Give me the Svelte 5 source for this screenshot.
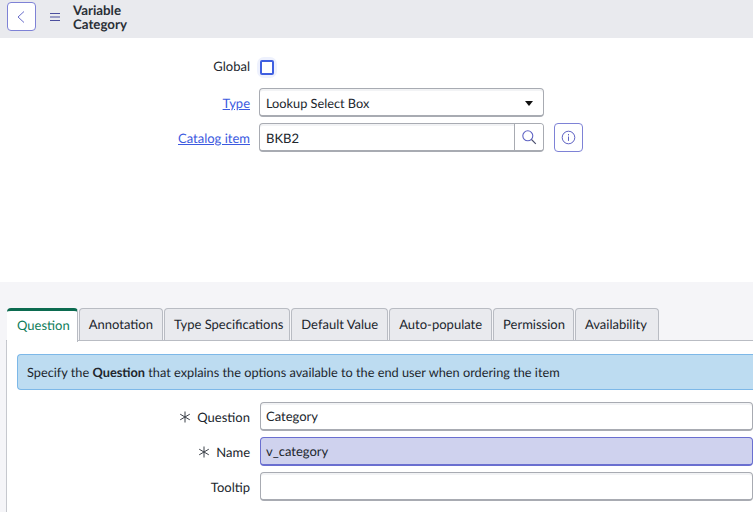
<script>
  const tabs = ["Question", "Annotation", "Type Specifications", "Default Value", "Auto-populate", "Permission", "Availability"];
</script>

{#snippet star()}
  <svg class="star" width="12" height="12" viewBox="0 0 12 12" fill="none" stroke="#3b4048" stroke-width="1"><path d="M6 .5v11M1.2 3.2l9.6 5.6M10.8 3.2 1.2 8.8"/></svg>
{/snippet}

<div class="page">
  <header class="header">
    <button class="icon-btn back" aria-label="Back">
      <svg width="12" height="16" viewBox="0 0 12 16"><path d="M8 2.5 2 8l6 5.5" fill="none" stroke="#6a6ecb" stroke-width="1"/></svg>
    </button>
    <svg class="menu" width="10" height="10" viewBox="0 0 10 10"><path d="M0 1.5h10M0 5h10M0 8.5h10" stroke="#4b4f9e" stroke-width="1.1"/></svg>
    <h1>Variable<br />Category</h1>
  </header>

  <section class="top-form">
    <div class="row global">
      <span class="label">Global</span>
      <span class="check"><span class="box"></span></span>
    </div>
    <div class="row type">
      <a class="label link" href="#type">Type</a>
      <div class="field select">
        Lookup Select Box
        <span class="caret"></span>
      </div>
    </div>
    <div class="row">
      <a class="label link" href="#catalog">Catalog item</a>
      <div class="field lookup">
        <span class="value">BKB2</span>
        <span class="search">
          <svg width="16" height="16" viewBox="0 0 16 16" fill="none" stroke="#5f63c4" stroke-width="1.1"><circle cx="6.8" cy="6.8" r="5"/><path d="m10.5 10.5 4.3 4.3" stroke="#4b4f6e"/></svg>
        </span>
      </div>
      <button class="icon-btn info" aria-label="Info">
        <svg width="15" height="15" viewBox="0 0 15 15" fill="none" stroke="#5f63c4" stroke-width="1"><circle cx="7.5" cy="7.5" r="6.3"/><path d="M7.5 6.5v4.4M7.5 4v1.4"/></svg>
      </button>
    </div>
  </section>

  <section class="tab-area">
    <nav class="tabs">
      {#each tabs as tab, i}
        <span class="tab" class:active={i === 0}>{tab}</span>
      {/each}
    </nav>
    <div class="panel">
      <div class="alert">Specify the <b>Question</b> that explains the options available to the end user when ordering the item</div>
      <div class="row q">
        <span class="label">{@render star()}Question</span>
        <div class="field wide">Category</div>
      </div>
      <div class="row q">
        <span class="label">{@render star()}Name</span>
        <div class="field wide name">v_category</div>
      </div>
      <div class="row q">
        <span class="label">Tooltip</span>
        <div class="field wide"></div>
      </div>
    </div>
  </section>
</div>

<style>
  :global(body) {
    margin: 0;
    overflow: hidden;
    background: #fff;
  }

  .page {
    width: 753px;
    height: 512px;
    overflow: hidden;
    font-family: Lato, sans-serif;
    font-size: 13px;
    text-rendering: geometricPrecision;
    color: #21262d;
  }

  .header {
    height: 38px;
    box-sizing: border-box;
    padding: 2px 0 0 7px;
    background: #e9eaee;
    display: flex;
    align-items: flex-start;
  }

  .icon-btn {
    width: 29px;
    height: 29px;
    padding: 0;
    display: flex;
    align-items: center;
    justify-content: center;
    background: #fff;
    border: 1px solid #7e82d6;
    border-radius: 4px;
  }

  .menu {
    margin: 10px 0 0 14px;
  }

  h1 {
    margin: 1px 0 0 13px;
    font-size: 13.3px;
    line-height: 14px;
    font-weight: 700;
    color: #2a2f36;
  }

  .top-form {
    height: 244px;
    box-sizing: border-box;
    padding-top: 15px;
  }

  .row {
    display: flex;
    align-items: center;
  }

  .label {
    width: 250px;
    flex: none;
    text-align: right;
    margin-right: 9px;
  }

  .link {
    color: #3c5ae0;
    text-decoration: underline;
  }

  .global {
    height: 28px;
    margin-bottom: 7px;
  }

  .global .label {
    padding-bottom: 2px;
  }

  .check {
    width: 14px;
    height: 15px;
    margin-left: 1px;
    border-radius: 4px;
    box-shadow: 0 0 0 3px #eef1fd;
  }

  .box {
    display: block;
    width: 14px;
    height: 15px;
    box-sizing: border-box;
    border: 2px solid #3f5fe0;
    border-radius: 2px;
    background: #fff;
  }

  .type {
    margin-bottom: 6px;
  }

  .field {
    height: 29px;
    box-sizing: border-box;
    border: 1px solid #a8abb2;
    border-bottom-width: 2px;
    border-radius: 4px;
    display: flex;
    align-items: center;
    padding-left: 5px;
    background: #fff;
    box-shadow: inset 0 2px 0 #f2f3f5;
  }

  .select {
    width: 285px;
    position: relative;
    font-size: 12.75px;
    padding-left: 6px;
    padding-top: 1px;
  }

  .caret {
    position: absolute;
    right: 10px;
    top: 12px;
    width: 0;
    height: 0;
    border: 4.5px solid transparent;
    border-top: 5.5px solid #111;
    border-bottom: 0;
  }

  .lookup {
    width: 285px;
    padding-left: 0;
    align-items: stretch;
  }

  .value {
    flex: 1;
    padding: 1px 0 0 6px;
    display: flex;
    align-items: center;
  }

  .search {
    width: 28px;
    display: flex;
    align-items: center;
    justify-content: center;
    border-left: 1px solid #a8abb2;
    background: #fff;
    border-radius: 0 3px 3px 0;
  }

  .info {
    margin-left: 10px;
  }

  .tab-area {
    height: 230px;
    padding-top: 26px;
    box-sizing: border-box;
    background: #f5f5f8;
  }

  .tabs {
    height: 32px;
    padding-left: 7px;
    display: flex;
    gap: 1px;
  }

  .tab {
    box-sizing: border-box;
    height: 33px;
    padding: 0 9px 2px;
    display: flex;
    align-items: center;
    background: #e9eaee;
    border: 1px solid #b9bcc3;
    border-bottom: 0;
    border-radius: 4px 4px 0 0;
    position: relative;
    z-index: 0;
  }

  .tab:nth-child(3) {
    padding-right: 6px;
  }

  .tab:nth-child(6) {
    padding-right: 8px;
  }

  .tab:nth-child(7) {
    padding-right: 11px;
  }

  .tab.active {
    background: #fff;
    color: #0f7d5a;
    border: 0;
    border-top: 3px solid #0c6b50;
    border-right: 1px solid #b9bcc3;
    z-index: 2;
    height: 34px;
    padding: 0 7px 4px 10px;
  }

  .panel {
    margin-left: 6px;
    height: 172px;
    box-sizing: border-box;
    background: #fff;
    border-top: 1px solid #b9bcc3;
    border-left: 1px solid #c6c8ce;
    padding-top: 13px;
    position: relative;
    z-index: 1;
  }

  .alert {
    margin-left: 10px;
    height: 36px;
    box-sizing: border-box;
    padding-left: 9px;
    font-size: 12.75px;
    line-height: 34px;
    white-space: nowrap;
    background: #bddcf1;
    border: 1px solid #7db8e8;
    border-right: 0;
    border-radius: 4px 0 0 4px;
    margin-bottom: 12px;
  }

  .q {
    margin-left: -7px;
    margin-bottom: 6px;
  }

  .q .label {
    margin-right: 10px;
  }

  .star {
    margin-right: 6px;
    vertical-align: -1.5px;
  }

  .wide {
    flex: 1;
  }

  .name {
    background: #cfd2ee;
    border-color: #6a6fd0;
    box-shadow: none;
  }
</style>
